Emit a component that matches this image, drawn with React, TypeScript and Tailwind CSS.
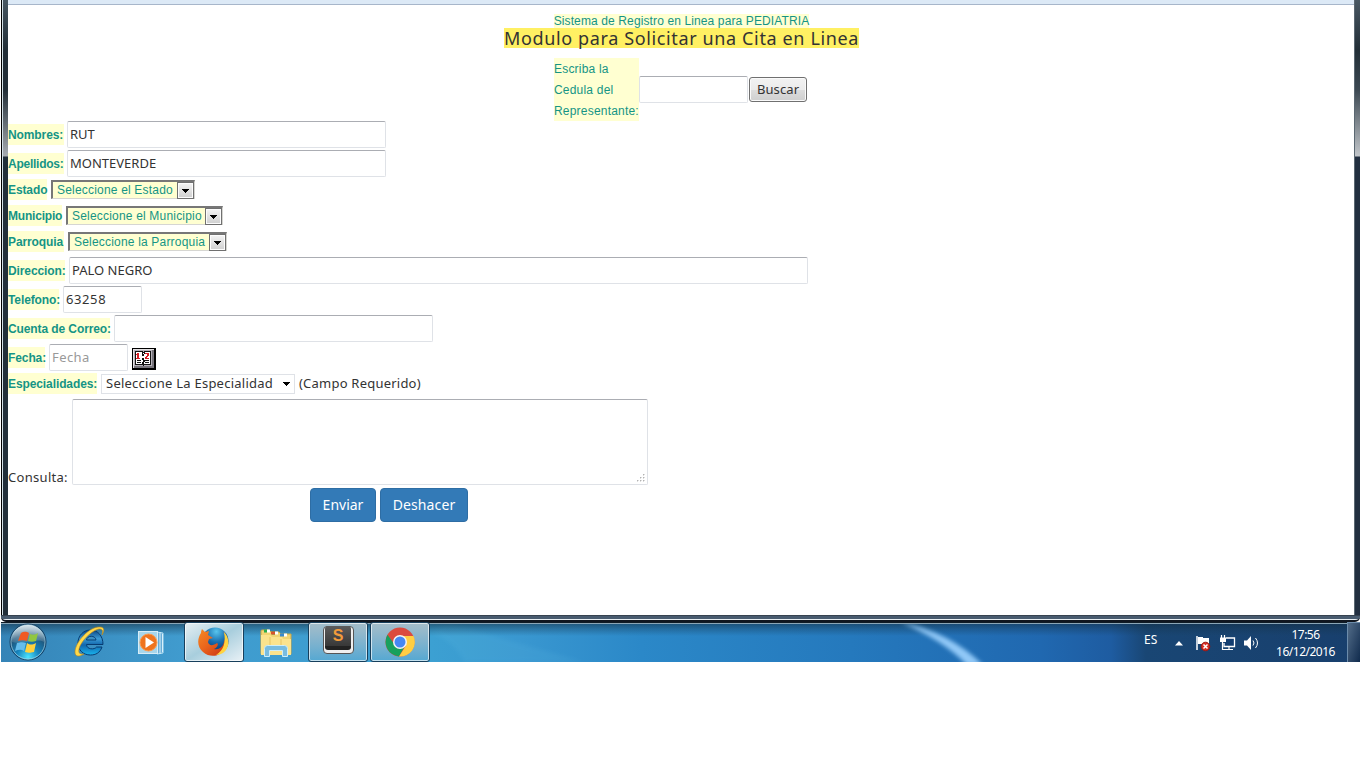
import React from "react";

const sans = "font-['Noto_Sans','Open_Sans',sans-serif]";
const labelBase =
  "block h-[21px] shrink-0 whitespace-nowrap bg-[#ffffd1] font-['Liberation_Sans',Arial,sans-serif] text-[12px] leading-[21px] text-[#159485]";
const field =
  "block h-[27px] shrink-0 rounded-[2px] border border-[#dfe2e7] border-t-[#abadb3] bg-white px-[2px] pb-[2px] text-[13px] text-[#333] outline-none placeholder:text-[#999]";

function Label({ w, children }: { w: string; children: React.ReactNode }) {
  return <span className={`${labelBase} pt-px font-bold tracking-[-0.1px] ${w}`}>{children}</span>;
}

function Row({ h, children }: { h: string; children: React.ReactNode }) {
  return <div className={`flex items-center ${h}`}>{children}</div>;
}

function Arrow() {
  return (
    <svg width="7" height="4" viewBox="0 0 7 4" className="block" shapeRendering="crispEdges">
      <path d="M0 0h7v1H6v1H5v1H4v1H3V3H2V2H1V1H0z" fill="#000" />
    </svg>
  );
}

function OldSelect({ w, children }: { w: string; children: React.ReactNode }) {
  return (
    <div className={`flex h-[19px] shrink-0 items-center justify-between border-l-2 border-t-2 border-r border-b border-[#d6d6d2] border-l-[#777] border-t-[#777] bg-[#ffffd1] pl-1 ${w}`}>
      <span className="whitespace-nowrap font-['Liberation_Sans',Arial,sans-serif] text-[12px] leading-4 tracking-[0.19px] text-[#159485]">{children}</span>
      <span className="flex h-[17px] w-[17px] shrink-0 items-center justify-center border border-[#707070] bg-linear-to-b from-[#f4f4f4] to-[#cfcfcf] pt-[2px] shadow-[inset_0_0_0_1px_#fcfcfc]">
        <Arrow />
      </span>
    </div>
  );
}

function CalendarIcon() {
  return (
    <svg width="24" height="22" viewBox="0 0 24 22" className="mt-[2px] block shrink-0" shapeRendering="crispEdges">
      <rect width="24" height="22" rx="1" fill="#000" />
      <rect x="1" y="1" width="21" height="19" fill="#e4e2e4" />
      <path d="M22 2v18H2v-2h18V2z" fill="#77747b" />
      <rect x="2" y="2" width="18" height="16" fill="#b5b1b9" />
      <path d="M3 3h7l1 1 1-1h7v14h-7l-1 1-1-1H3z" fill="#111" />
      <path d="M4 4h6l1 2 1-2h6v12h-6l-1-1-1 1H4z" fill="#fff" />
      <path d="M10 4h1v2h1V4h1v2h-1v2h-1v2h1v2h1v2h-1v2h-2v-2h1v-2h-1v-2h1V8h-1z" fill="#111" />
      <path d="M4 6h1V5h2v5h1v1H4v-1h1V7H4zM13 6V5h4v3h-1v1h-1v1h2v1h-4V9h1V8h1V6z" fill="#d51d25" />
      <path d="M5 12h4v1H5zm0 2h4v1H5zm8-2h4v1h-4zm0 2h4v1h-4z" fill="#111" />
    </svg>
  );
}

function StartOrb() {
  return (
    <svg width="38" height="38" viewBox="0 0 38 38" className="block">
      <defs>
        <radialGradient id="orb" cx=".5" cy=".92" r=".9">
          <stop offset="0" stopColor="#4ce5ff" />
          <stop offset=".35" stopColor="#1683bd" />
          <stop offset=".7" stopColor="#205579" />
          <stop offset="1" stopColor="#7fa8be" />
        </radialGradient>
        <linearGradient id="gloss" x1="0" y1="0" x2="0" y2="1">
          <stop offset="0" stopColor="#fff" stopOpacity=".7" />
          <stop offset="1" stopColor="#fff" stopOpacity=".1" />
        </linearGradient>
      </defs>
      <circle cx="19" cy="19" r="18" fill="url(#orb)" stroke="#153e61" />
      <circle cx="19" cy="19" r="17" fill="none" stroke="#a9d5e7" strokeOpacity=".7" />
      <path d="M3 19C2 8 10 2 19 2s17 7 16 17c-8-5-21 4-32 0z" fill="url(#gloss)" />
      <path d="M12 10c3-2 6-1 8 0l-2 8c-3-1-6-1-9 0z" fill="#f05a24" />
      <path d="M21 11c3 1 5 1 8-1l-2 8c-3 1-5 1-8 0z" fill="#91c640" />
      <path d="M8 20c4-1 6-1 9 0l-2 8c-3-2-6-1-9 0z" fill="#65bdec" />
      <path d="M18 20c3 2 5 2 9 0l-2 9c-4 1-6 1-9 0z" fill="#ffd13d" />
    </svg>
  );
}

function ExplorerE() {
  return (
    <svg width="34" height="34" viewBox="0 0 34 34" className="block">
      <defs>
        <linearGradient id="ie" x1="0" y1="0" x2="0" y2="1">
          <stop offset="0" stopColor="#0a4583" />
          <stop offset=".35" stopColor="#3b9bd6" />
          <stop offset=".6" stopColor="#1266ac" />
          <stop offset="1" stopColor="#19b4ee" />
        </linearGradient>
      </defs>
      <path fillRule="evenodd" d="M30 19.5H13.5c0 5 8 5.500 10 2.500H29c-2 6-6.500 8-11.500 8C10 30 5 25 5 18S10 5 17.500 5 30 11 30 19.500zM13.500 15H23c-.5-5-9-5-9.500 0z" fill="url(#ie)" stroke="#073c72" />
      <path d="M29 10c3-5 2-8-2-8C17 1 2 17 2 27c0 5 4 5 9 2-6 1-6-3-4-8C11 13 20 5 26 4c4 0 4 2 3 6z" fill="#ffd94b" stroke="#bb8417" strokeWidth=".6" />
    </svg>
  );
}

function MediaIcon() {
  return (
    <svg width="27" height="26" viewBox="0 0 27 26" className="block">
      <path d="M19 2l6 1v20l-6 1z" fill="#66acd7" stroke="#b9e2f4" />
      <path d="M22 2v22M24.500 4v18" stroke="#d9f0fb" />
      <rect x=".5" y="1.500" width="19" height="22" fill="#a8d6eb" stroke="#d7edf7" />
      <circle cx="10.500" cy="12.500" r="8.500" fill="#ef741f" stroke="#fb9c50" />
      <path d="M7.500 7l8.500 5.500L7.500 18z" fill="#fff" />
    </svg>
  );
}

function FirefoxIcon() {
  return (
    <svg width="32" height="32" viewBox="0 0 32 32" className="block">
      <defs>
        <radialGradient id="ffb" cx=".55" cy=".15" r=".8">
          <stop offset="0" stopColor="#58c5ed" />
          <stop offset=".5" stopColor="#176cae" />
          <stop offset="1" stopColor="#102f65" />
        </radialGradient>
        <linearGradient id="ffo" x1="0" y1="0" x2="1" y2="1">
          <stop offset="0" stopColor="#f58a25" />
          <stop offset=".45" stopColor="#ea651c" />
          <stop offset="1" stopColor="#c62b13" />
        </linearGradient>
      </defs>
      <circle cx="17" cy="15" r="13.500" fill="url(#ffb)" />
      <path d="M3 7c0-2 1-4 1-4l3 3 4-1-1 4 5 3-4 1-1 3c1 4 5 4 9 1 2 1 0 5-3 6 5 1 9-2 10-7 2-4 1-8-1-11 4 4 6 10 3 15-3 10-15 13-23 6C-1 21-1 13 3 7z" fill="url(#ffo)" />
      <path d="M26 6c6 6 6 16-1 21-2 1-5 2-7 2 8-5 10-13 8-23z" fill="#ffd33f" />
    </svg>
  );
}

function FolderIcon() {
  return (
    <svg width="34" height="30" viewBox="0 0 34 30" className="block">
      <path d="M2 26V3q0-1 1-1h7l2 2h8l2 2h10v20z" fill="#f1d573" stroke="#c9a645" />
      <path d="M5 1.500h3v3H5zM13 3.500h3v3h-3z" fill="#2aab4d" />
      <path d="M8 1.500h3v3H8zM16 3.500h3v3h-3zM25 5.500h3v3h-3z" fill="#fff" />
      <path d="M12 3.500h4v3h-4z" fill="#d9522c" />
      <path d="M21 5.500h4v3h-4z" fill="#3a8acd" />
      <path d="M2 7h9l2 2h10l1 2h8v16H2z" fill="#fbe38d" />
      <path d="M11 9v14M22 11v12" stroke="#e7c565" />
      <path d="M5.500 28.500v-8q0-3 3-3h17q3 0 3 3v8h-5v-6h-13v6z" fill="#78bce0" stroke="#cdeefa" />
    </svg>
  );
}

function SublimeIcon() {
  return (
    <div className="mb-[4px] flex h-[28px] w-[31px] justify-center rounded-[4px] border border-[#555] bg-[#efefef]">
      <div className="-mt-px flex h-[24px] w-[26px] items-center justify-center rounded-[3px] border-b-4 border-[#222] bg-linear-to-b from-[#5c5c5c] to-[#383838] font-['Liberation_Sans',Arial,sans-serif] text-[16px] font-bold leading-none text-[#f39b3b]">S</div>
    </div>
  );
}

function ChromeIcon() {
  return (
    <svg width="30" height="30" viewBox="0 0 30 30" className="block">
      <circle cx="15" cy="15" r="14.500" fill="#db4b3f" />
      <path d="M2.500 7.700A14.500 14.500 0 0 0 14 29.400l6-10.700-11-2z" fill="#17a05d" />
      <path d="M14 29.500A14.500 14.500 0 0 0 28.500 9H15l6 9.500z" fill="#ffce43" />
      <circle cx="15" cy="15" r="7" fill="#f3f4f4" />
      <circle cx="15" cy="15" r="5.500" fill="#4587f3" />
    </svg>
  );
}

function TaskButton({ tone, children }: { tone: string; children: React.ReactNode }) {
  return <div className={`flex h-[40px] w-[60px] shrink-0 items-center justify-center rounded-[3px] border border-[#173f5c] shadow-[inset_0_0_0_1px_rgba(255,255,255,0.65)] ${tone}`}>{children}</div>;
}

function TrayIcons() {
  return (
    <svg width="66" height="18" viewBox="0 0 66 18" className="block">
      <path d="M2 2v14" stroke="#fff" strokeWidth="1.500" />
      <path d="M3 3h5v1h6v7H9v-1H3z" fill="#fff" />
      <circle cx="10.500" cy="12.500" r="4.300" fill="#d52c23" stroke="#9c1915" />
      <path d="M8.500 10.500l4 4m0-4l-4 4" stroke="#fff" strokeWidth="1.500" />
      <path d="M31 4h8.500v8.500H29V9" fill="#123d70" stroke="#fff" strokeWidth="1.300" />
      <path d="M30 15.500h8M34 12.500v3M26.500 1v3M29.500 1v3M27.500 8v7.500H30" fill="none" stroke="#fff" strokeWidth="1.200" />
      <path d="M25 3.500h6V8h-6z" fill="#fff" />
      <path d="M49 6.500h3l4-4.500v14l-4-4.500h-3z" fill="#fff" />
      <path d="M58 6.500q2 2.500 0 5M60.500 4q4 5 0 10" stroke="#fff" fill="none" />
    </svg>
  );
}

function Taskbar() {
  return (
    <footer className="relative ml-px flex h-[40px] overflow-hidden bg-[linear-gradient(90deg,#3584b7_0,#409bce_180px,#3ca0d2_430px,#3997d0_520px,#2b88c8_640px,#2579bd_850px,#2068b0_1040px,#1e5ca1_1110px,#194674_1145px,#183f6d_1359px)]">
      <svg className="absolute inset-0" width="1359" height="40" viewBox="0 0 1359 40">
        <defs>
          <filter id="soft"><feGaussianBlur stdDeviation="2" /></filter>
          <linearGradient id="shade" x1="0" y1="0" x2="0" y2="1">
            <stop offset="0" stopColor="#122b3e" stopOpacity=".65" />
            <stop offset=".35" stopColor="#173b55" stopOpacity="0" />
          </linearGradient>
        </defs>
        <path d="M428 10q25 9 35 30h120L445 0z" fill="#77cdec" opacity=".1" filter="url(#soft)" />
        <rect width="1359" height="40" fill="url(#shade)" />
        <path d="M899 0q50 10 83 43h-16Q942 18 899 0z" fill="#9ed3ff" opacity=".9" filter="url(#soft)" />
        <path d="M0 .5h1359" stroke="#101c26" />
        <path d="M0 1.500h1359" stroke="#8ba6b7" />
      </svg>
      <div className="relative flex w-full items-start">
        <div className="flex w-[183px] shrink-0 pl-[8px] pt-px">
          <StartOrb />
          <div className="ml-[26px] mt-[2px]"><ExplorerE /></div>
          <div className="ml-[31px] mt-[7px]"><MediaIcon /></div>
        </div>
        <div className="flex">
          <TaskButton tone="bg-linear-to-br from-[#e6eff2] via-[#a8cedd] to-[#e9f1f6]"><FirefoxIcon /></TaskButton>
          <div className="flex w-[64px] justify-center pt-[6px]"><FolderIcon /></div>
          <TaskButton tone="bg-linear-to-b from-[#a5bdc9] to-[#54a8d2]"><SublimeIcon /></TaskButton>
          <div className="w-[2px]" />
          <TaskButton tone="bg-linear-to-b from-[#a5bdc9] to-[#54a8d2]"><ChromeIcon /></TaskButton>
        </div>
        <div className={`ml-auto flex h-[40px] text-[12px] leading-[17px] text-white ${sans}`}>
          <span className="w-[31px] pt-[9px] tracking-[0.1px]">ES</span>
          <svg width="8" height="5" viewBox="0 0 8 5" className="mt-[19px]"><path d="M0 4.500L4 0l4 4.500z" fill="#fff" /></svg>
          <div className="ml-[12px] mt-[12px]"><TrayIcons /></div>
          <div className="ml-[6px] w-[77px] pt-[4px] text-center tracking-[-0.5px]"><div>17:56</div><div>16/12/2016</div></div>
          <div className="ml-[3px] h-[40px] w-[13px] border-l border-t border-[#6c8cab] bg-linear-to-br from-[#536d89] to-[#102b4d]" />
        </div>
      </div>
    </footer>
  );
}

export default function App() {
  return (
    <div className={`h-[768px] w-[1360px] overflow-hidden bg-white text-[13px] text-[#333] ${sans}`}>
      <div className="flex h-[622px] flex-col">
        <div className="flex h-[615px]">
          <div className="ml-px w-[7px] shrink-0 border-l border-[#000] bg-[linear-gradient(#485762,#222e37_50px,#222e37_90px,#a6abb0_156px,#222f3a_157px)] shadow-[inset_1px_0_0_#d5e2e8]" />
          <main className="min-w-0 flex-1">
            <div className="h-[5px] border-b border-[#a7b6ca] bg-[#dce9f6]" />
            <header className="flex h-[115px] flex-col items-center">
              <span className="ml-[1px] mt-[9px] h-[14px] whitespace-nowrap bg-[#ffffd1] pt-px font-['Liberation_Sans',Arial,sans-serif] text-[12px] leading-[13px] tracking-[0.12px] text-[#159485]">Sistema de Registro en Linea para PEDIATRIA</span>
              <h1 className="ml-[1px] flex h-[20px] w-[355px] items-center justify-center whitespace-nowrap bg-[#fff063] text-[18px] leading-[20px] tracking-[0.63px]">Modulo para Solicitar una Cita en Linea</h1>
              <div className="mt-[10px] flex w-[254px] items-center">
                <div className={`${labelBase} !h-[63px] w-[85px] pt-px tracking-[0.2px]`}>Escriba la<br />Cedula del<br />Representante:</div>
                <input className={`${field} w-[109px]`} />
                <button className="ml-px h-[25px] w-[58px] shrink-0 rounded-[3px] border border-[#707070] bg-[linear-gradient(#f2f2f2,#ebebeb_50%,#dddddd_51%,#cfcfcf)] text-[13px] leading-none tracking-[0.1px] shadow-[inset_0_0_0_1px_#fafafa]">Buscar</button>
              </div>
            </header>
            <form onSubmit={(e) => e.preventDefault()}>
              <Row h="h-[29px]"><Label w="w-[56px]">Nombres:</Label><input className={`${field} ml-[3px] w-[319px]`} defaultValue="RUT" /></Row>
              <Row h="h-[29px]"><Label w="w-[56px] !tracking-[-0.25px]">Apellidos:</Label><input className={`${field} ml-[3px] w-[319px]`} defaultValue="MONTEVERDE" /></Row>
              <Row h="h-[26px] pb-[3px]"><Label w="w-[39px] mr-[4px]">Estado</Label><OldSelect w="w-[144px]">Seleccione el Estado</OldSelect></Row>
              <Row h="h-[26px] pb-[3px]"><Label w="w-[54px] mr-[4px] !tracking-[-0.2px]">Municipio</Label><OldSelect w="w-[157px]">Seleccione el Municipio</OldSelect></Row>
              <Row h="h-[26px] pb-[3px]"><Label w="w-[56px] mr-[4px]">Parroquia</Label><OldSelect w="w-[159px]">Seleccione la Parroquia</OldSelect></Row>
              <Row h="h-[29px]"><Label w="w-[57px]">Direccion:</Label><input className={`${field} ml-[4px] w-[739px]`} defaultValue="PALO NEGRO" /></Row>
              <Row h="h-[29px]"><Label w="w-[51px]">Telefono:</Label><input className={`${field} ml-[4px] w-[79px] tracking-[0.6px]`} defaultValue="63258" /></Row>
              <Row h="h-[29px]"><Label w="w-[102px]">Cuenta de Correo:</Label><input className={`${field} ml-[4px] w-[319px]`} /></Row>
              <Row h="h-[29px]"><Label w="w-[37px]">Fecha:</Label><input className={`${field} ml-[4px] mr-[4px] w-[79px] tracking-[0.4px]`} placeholder="Fecha" /><CalendarIcon /></Row>
              <Row h="h-[26px] pb-[2px]">
                <Label w="w-[89px] mb-px">Especialidades:</Label>
                <div className="ml-[4px] flex h-[20px] w-[194px] items-center justify-between border border-[#dfe2e7] pl-[4px] pr-[4px]"><span className="whitespace-nowrap tracking-[0.24px]">Seleccione La Especialidad</span><Arrow /></div>
                <span className="ml-[4px] whitespace-nowrap tracking-[0.22px]">(Campo Requerido)</span>
              </Row>
              <div className="flex h-[87px] items-end"><span className="w-[64px] pt-px leading-[16px] tracking-[0.3px]">Consulta:</span>
                <div className="mt-px flex h-[86px] w-[576px] items-end justify-end rounded-[2px] border border-[#dfe2e7] border-t-[#abadb3] p-[2px]">
                  <svg width="9" height="9" viewBox="0 0 9 9" shapeRendering="crispEdges"><path d="M7 1h1v1H7zM4 4h1v1H4zM7 4h1v1H7zM1 7h1v1H1zM4 7h1v1H4zM7 7h1v1H7z" fill="#999" stroke="#bbb" strokeWidth=".5" /></svg>
                </div>
              </div>
              <div className="mt-[3px] flex gap-[4px] pl-[302px] text-[14px] text-white">
                <button className="h-[34px] w-[66px] rounded-[4px] border border-[#2e6da4] bg-[#337ab7] pb-[2px]">Enviar</button>
                <button className="h-[34px] w-[88px] rounded-[4px] border border-[#2e6da4] bg-[#337ab7] pb-[2px] tracking-[0.1px]">Deshacer</button>
              </div>
            </form>
          </main>
          <div className="w-[6px] shrink-0 border-l border-[#5b6872] bg-[linear-gradient(#485762,#222e37_50px,#3c4852_90px,#c2c6ca_156px,#222f40_157px)]" />
        </div>
        <div className="ml-px h-[7px] rounded-b-[5px] border-b-2 border-b-[#10161f] bg-[linear-gradient(#36424f_0,#36424f_1px,#485b6f_1px,#485b6f_4px,#e8eef2_4px)]" />
      </div>
      <Taskbar />
    </div>
  );
}
